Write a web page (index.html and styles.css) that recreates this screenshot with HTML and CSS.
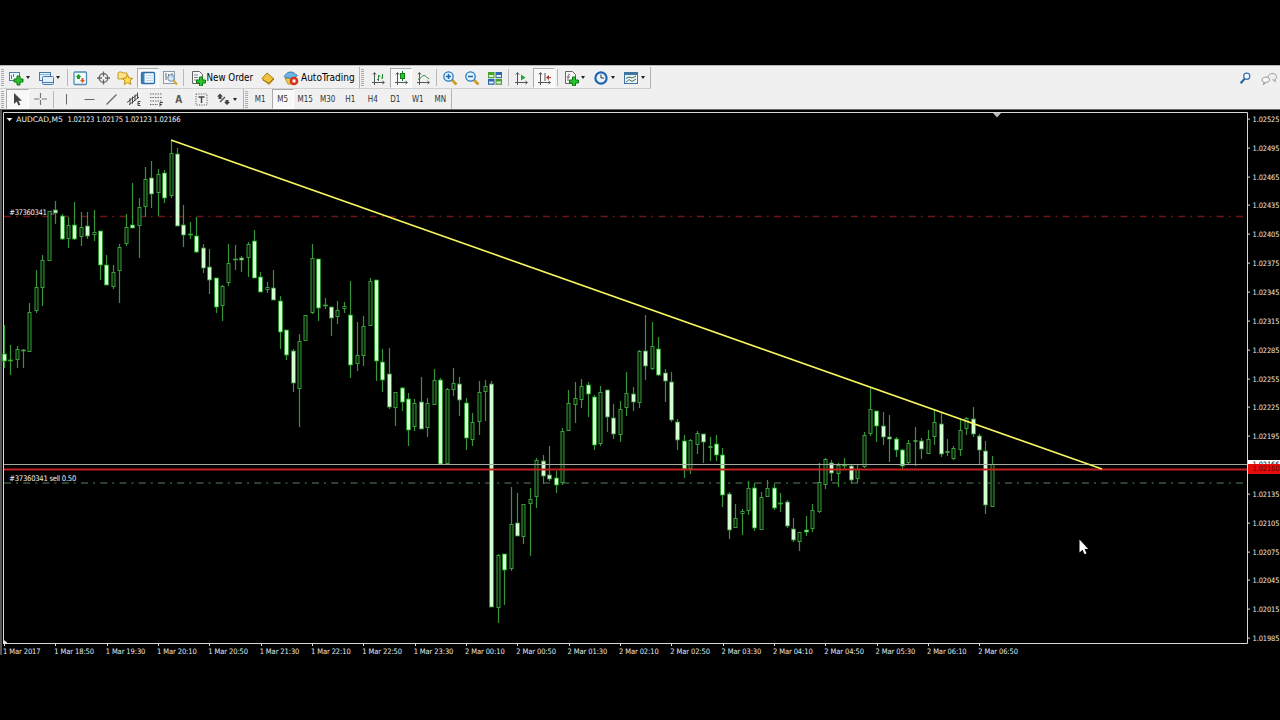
FILE: index.html
```html
<!DOCTYPE html>
<html lang="en">
<head>
    <meta charset="UTF-8">
    <meta name="viewport" content="width=device-width, initial-scale=1.0">
    <title>AUDCAD,M5</title>
    <link rel="stylesheet" href="styles.css">
</head>
<body>
    <div class="terminal">
        <div class="toolbars">
            <div class="row">
                <div class="bar bar-main">
                    <span class="grip"></span>
                    <button class="btn drop"><svg class="icon" viewBox="0 0 16 16"><rect x="1.5" y="2.500" width="10" height="8" fill="#eef6fd" stroke="#4f7ea8"/><path d="M3.500 5v4M5.500 4v3" stroke="#4f7ea8"/><path d="M9 6h3v3h3v3h-3v3H9v-3H6V9h3z" fill="#2cc42c" stroke="#0b7a14"/></svg><i class="caret"></i></button>
                    <button class="btn drop"><svg class="icon" viewBox="0 0 16 16"><rect x="1.500" y="2.500" width="11" height="8" fill="#e4f0fb" stroke="#4779ad"/><path d="M2 4.500h10" stroke="#8eb6db"/><rect x="4.500" y="6.500" width="11" height="8" rx="1" fill="#e4f0fb" stroke="#4779ad"/><path d="M5 12.500h10" stroke="#4779ad"/></svg><i class="caret"></i></button>
                    <span class="sep tight"></span>
                    <button class="btn"><svg class="icon" viewBox="0 0 16 16"><rect x="2" y="2" width="12.500" height="12.500" rx="1" fill="#f3fafe" stroke="#4d8fb5" stroke-width="1.300"/><path d="M6.500 4l3 3H8v2H5V7H3.500z" fill="#22a02a"/><path d="M10.500 13l-2.500-3h1.500V8h2v2H13z" fill="#e05a28"/></svg></button>
                    <button class="btn"><svg class="icon" viewBox="0 0 16 16"><circle cx="8.500" cy="8" r="4.300" fill="none" stroke="#666" stroke-width="1.300"/><path d="M8.500 1.500v5M8.500 9.500v5M2 8h5M10 8h5" stroke="#666" stroke-width="1.300"/></svg></button>
                    <button class="btn"><svg class="icon" viewBox="0 0 16 16"><path d="M1 3l1-1h3l1 1h4v6H1z" fill="#fbe58a" stroke="#c69a2c"/><path d="M10.500 4.800l1.500 3.200 3.700.4-2.700 2.400.8 3.700-3.300-1.900-3.300 1.900.8-3.700-2.700-2.400 3.700-.4z" fill="#ffe14a" stroke="#c28d1c"/></svg></button>
                    <button class="btn on"><svg class="icon" viewBox="0 0 16 16"><rect x="1.500" y="2.500" width="13" height="11" rx="1" fill="#f0f8fe" stroke="#2e6da6" stroke-width="1.300"/><path d="M2 3h2.500v10H2z" fill="#3f7fb9"/><path d="M6 5.500h7M6 8h7M6 10.500h7" stroke="#bcd6ea"/></svg></button>
                    <button class="btn"><svg class="icon" viewBox="0 0 16 16"><rect x="1.500" y="1.500" width="11" height="12" fill="#f4f6f8" stroke="#8a9aa8"/><path d="M4 3v7M6.500 4v4M10 3v5" stroke="#666"/><circle cx="9" cy="8" r="3.300" fill="#cde4f4cc" stroke="#6791b5"/><path d="M11.500 10.500l3.500 4" stroke="#d9a92e" stroke-width="2"/></svg></button>
                    <span class="sep tight"></span>
                    <button class="btn wide order"><svg class="icon" viewBox="0 0 16 16"><path d="M2.500 1.500h7l3 3v9h-10z" fill="#f6f6f6" stroke="#666"/><path d="M4 5h4M4 7.500h4M4 10h3" stroke="#888"/><path d="M9.500 7h3v3h3v3h-3v3h-3v-3h-3v-3h3z" fill="#2cc42c" stroke="#0b7a14"/></svg><span>New Order</span></button>
                    <button class="btn"><svg class="icon" viewBox="0 0 16 16"><path d="M2 8.500L7 3l7 6-5 5.500z" fill="#f1c43c" stroke="#a8781a"/><path d="M2.500 10l6.500 3 4.500-4.500" fill="none" stroke="#a8781a"/></svg></button>
                    <button class="btn wide auto"><svg class="icon" viewBox="0 0 16 16"><path d="M2 8h10l-2 6H5z" fill="#f2cb4c" stroke="#b98d22"/><path d="M1 6.500C3 5 3.500 2 7.500 2s4 2 7 3.500C12 8.500 4 9 1 6.500z" fill="#6bb5e6" stroke="#397fb0"/><circle cx="11" cy="11" r="4.300" fill="#d93018"/><rect x="9.500" y="9.500" width="3" height="3" fill="#fff"/></svg><span>AutoTrading</span></button>
                </div>
                <div class="bar bar-charts">
                    <span class="grip"></span>
                    <button class="btn"><svg class="icon" viewBox="0 0 16 16"><path d="M4.500 3v12M2 12.500h12M3 4.500l1.500-2L6 4.500M12.500 11l2 1.500-2 1.500" fill="none" stroke="#555"/><path d="M8.500 5v6M7 9.500h1.500M8.500 6h2M12.500 4v4.500M11 8h1.500" stroke="#29862e"/></svg></button>
                    <button class="btn on"><svg class="icon" viewBox="0 0 16 16"><path d="M4.500 3v12M2 12.500h12M3 4.500l1.500-2L6 4.500M12.500 11l2 1.500-2 1.500" fill="none" stroke="#555"/><path d="M9.500 1v10" stroke="#167d1b"/><rect x="7.500" y="3.500" width="4" height="5" fill="#25c82b" stroke="#167d1b"/></svg></button>
                    <button class="btn"><svg class="icon" viewBox="0 0 16 16"><path d="M4.500 3v12M2 12.500h12M3 4.500l1.500-2L6 4.500M12.500 11l2 1.500-2 1.500" fill="none" stroke="#555"/><path d="M3 9.500c3-1 4-4 6-4s3 2.500 5 3.500" fill="none" stroke="#3b8a3d"/></svg></button>
                    <span class="sep"></span>
                    <button class="btn"><svg class="icon" viewBox="0 0 16 16"><path d="M10 10l4.500 4.500" stroke="#cf9d22" stroke-width="2.600"/><circle cx="6.500" cy="6.500" r="4.700" fill="#e3f3fd" stroke="#2b79bd" stroke-width="1.300"/><path d="M4 6.500h5M6.500 4v5" stroke="#1b66ad" stroke-width="1.500"/></svg></button>
                    <button class="btn"><svg class="icon" viewBox="0 0 16 16"><path d="M10 10l4.500 4.500" stroke="#cf9d22" stroke-width="2.600"/><circle cx="6.500" cy="6.500" r="4.700" fill="#e3f3fd" stroke="#2b79bd" stroke-width="1.300"/><path d="M4 6.500h5" stroke="#1b66ad" stroke-width="1.500"/></svg></button>
                    <button class="btn"><svg class="icon" viewBox="0 0 16 16"><path d="M1 2h6.500v6H1z" fill="#46a329"/><path d="M8.500 2H15v6H8.500z" fill="#2c66b5"/><path d="M1 8.800h6.500v6H1z" fill="#2c66b5"/><path d="M8.500 8.800H15v6H8.500z" fill="#46a329"/><path d="M2 5h4.500v2H2zM9.500 5H14v2H9.500zM2 11.500h4.500v2H2zM9.500 11.500H14v2H9.500z" fill="#e5f3e5"/></svg></button>
                    <span class="sep"></span>
                    <button class="btn"><svg class="icon" viewBox="0 0 16 16"><path d="M4.500 3v12M2 12.500h12M3 4.500l1.500-2L6 4.500M12.500 11l2 1.500-2 1.500" fill="none" stroke="#555"/><path d="M8 4.500l4.500 3L8 10.500z" fill="#2aa336"/></svg></button>
                    <button class="btn on"><svg class="icon" viewBox="0 0 16 16"><path d="M4.500 3v12M2 12.500h12M3 4.500l1.500-2L6 4.500M12.500 11l2 1.500-2 1.500" fill="none" stroke="#555"/><path d="M9 3v8" stroke="#555"/><path d="M10 7.500l3-2.500v2h2v1h-2v2z" fill="#b2392c"/></svg></button>
                    <span class="sep"></span>
                    <button class="btn drop"><svg class="icon" viewBox="0 0 16 16"><path d="M2.500 1.500h7l3 3v9h-10z" fill="#f6f6f6" stroke="#666"/><path d="M7 4q-2 0-2 3v4M4 7h3" fill="none" stroke="#777"/><path d="M9.500 7h3v3h3v3h-3v3h-3v-3h-3v-3h3z" fill="#2cc42c" stroke="#0b7a14"/></svg><i class="caret"></i></button>
                    <button class="btn drop"><svg class="icon" viewBox="0 0 16 16"><circle cx="8" cy="8" r="5.600" fill="#e8f4fd" stroke="#2064b0" stroke-width="2.200"/><path d="M8 4.500V8h3" fill="none" stroke="#333"/></svg><i class="caret"></i></button>
                    <button class="btn drop"><svg class="icon" viewBox="0 0 16 16"><rect x="1.500" y="2.500" width="13" height="11" fill="#eaf4fb" stroke="#3f75a3"/><path d="M1.500 4h13" stroke="#3f75a3" stroke-width="2"/><path d="M3 8.500l3-1.500 3 1 4-2M3 12.500l3-3 3 2 4-2.500" fill="none" stroke="#4c6b4c"/></svg><i class="caret"></i></button>
                </div>
                <div class="tools">
                    <svg class="icon" viewBox="0 0 16 16"><path d="M7.500 9L3 14" stroke="#245ca3" stroke-width="2.400"/><circle cx="10" cy="6" r="3.500" fill="#f3f8fd" stroke="#3970b4" stroke-width="1.400"/></svg>
                    <svg class="icon chat" viewBox="0 0 18 16"><path d="M8 7c-1-5 9-6 9-1 0 2-1 3-2 3l1 2.500L12.500 9" fill="#eee" stroke="#999"/><path d="M5.500 6.500C.500 6.500.500 12 4 12l-1 2.500L6 12c5 0 5-5.500-.5-5.500z" fill="#f6f6f6" stroke="#888"/></svg>
                </div>
            </div>
            <div class="row row-lines">
                <div class="bar bar-lines">
                    <span class="grip"></span>
                    <button class="btn on"><svg class="icon" viewBox="0 0 16 16"><path d="M5 2v11l2.700-2.500 1.800 4 1.800-.8-1.800-3.900H13z" fill="#444"/></svg></button>
                    <button class="btn"><svg class="icon" viewBox="0 0 16 16"><path d="M8.500 2v5M8.500 9v5M2 8h5.500M9.500 8H15" stroke="#777" stroke-width="1.200"/></svg></button>
                    <span class="sep"></span>
                    <button class="btn"><svg class="icon" viewBox="0 0 16 16"><path d="M8.500 3v10.500" stroke="#666"/></svg></button>
                    <button class="btn"><svg class="icon" viewBox="0 0 16 16"><path d="M3.500 8.500h10" stroke="#666"/></svg></button>
                    <button class="btn"><svg class="icon" viewBox="0 0 16 16"><path d="M3.500 13.500l10-10" stroke="#666" stroke-width="1.200"/></svg></button>
                    <button class="btn"><svg class="icon" viewBox="0 0 16 16"><path d="M1 11.500L12 3M3 14l10-8M4 7v6M6.500 5.500v7M9 3.500v6M11.500 1.500v6" stroke="#444"/><path d="M14.500 10.500H12v4h2.500M12 12.500h2" fill="none" stroke="#444"/></svg></button>
                    <button class="btn"><svg class="icon" viewBox="0 0 16 16"><path d="M2 3h12M2 6.500h12M2 10h12M2 13.500h8" stroke="#666" stroke-dasharray="1.500 1"/><path d="M12 15.500v-4h3M12 13.500h2" fill="none" stroke="#444"/></svg></button>
                    <button class="btn glyph">A</button>
                    <button class="btn"><svg class="icon" viewBox="0 0 16 16"><rect x="3" y="3" width="11" height="11" fill="none" stroke="#666" stroke-dasharray="1.200 1.200"/><path d="M5.500 6h6M8.500 6v6" stroke="#444" stroke-width="1.400"/></svg></button>
                    <button class="btn drop"><svg class="icon" viewBox="0 0 16 16"><path d="M5 2.500l3 3H6.500V8h-3V5.500H2zM12 14l-3-3h1.500V9h3v2H15z" fill="#444"/><path d="M5 11l5-5" stroke="#555" stroke-width="1.400"/></svg><i class="caret"></i></button>
                </div>
                <div class="bar bar-periods">
                    <span class="grip"></span>
                    <button class="btn">M1</button>
                    <button class="btn on">M5</button>
                    <button class="btn">M15</button>
                    <button class="btn">M30</button>
                    <button class="btn">H1</button>
                    <button class="btn">H4</button>
                    <button class="btn">D1</button>
                    <button class="btn">W1</button>
                    <button class="btn">MN</button>
                </div>
            </div>
        </div>
        <div class="chart-window">
            <div class="chart-body">
                <svg id="chart" class="chart" viewBox="2 110 1246 535">
                    <path class="frame" d="M3.500 644V112.500H1247.500V643.500H3.500"/>
                    <path class="mark" d="M993 113h8l-4 4.500z"/>
                    <path class="corner" d="M4 640l4 3.500H4z"/>
                    <path class="caption" d="M6.500 118h6l-3 3.300z"/>
                    <text class="caption" x="16.300" y="122" textLength="46.500" lengthAdjust="spacingAndGlyphs">AUDCAD,M5</text>
                    <text class="caption" x="67.500" y="122" textLength="113">1.02123 1.02175 1.02123 1.02166</text>
                    <path class="stop" d="M4 216.500H1244"/>
                    <text class="caption" x="9.300" y="215" textLength="37.500">#37360341</text>
                    <text class="caption dim" x="49" y="215">sl</text>
                    <path class="entry" d="M4 483H1244"/>
                    <g id="candles"></g>
                    <path class="bid" d="M4 464.500H1247"/>
                    <path class="level" d="M4 469.500H1247"/>
                    <text class="caption" x="9.300" y="481" textLength="67">#37360341 sell 0.50</text>
                    <path class="trend" d="M171 140L1102 469"/>
                    <path class="cursor" d="M1079.500 539.500v13l3-2.700 2 4.500 2-1-2-4.300h3.700z"/>
                </svg>
                <div class="prices" id="prices">
                    <div class="tag tag-bid">1.02166</div>
                    <div class="tag tag-level">1.02160</div>
                </div>
            </div>
            <div class="times" id="times"></div>
        </div>
    </div>
    <script>
        const NS = "http://www.w3.org/2000/svg";
        const firstX = 4.3;
        const step = 6.416;

        // high, body top, body bottom, low, 1 = falling bar (filled)
        const bars = [
            [325,354,361,368,1],[345,360,361,375,1],[346,349,360,368,0],[349,350,351,368,1],[303,312,352,352,0],
            [270,287,311,313,0],[255,260,288,306,0],[211,211,261,261,0],[201,210,213,224,1],[214,216,239,240,1],
            [217,225,239,248,0],[202,225,239,240,1],[212,227,237,246,0],[212,226,236,239,1],[210,232,235,241,0],
            [231,231,265,280,1],[255,265,285,285,1],[265,272,287,289,0],[244,247,271,303,0],[214,227,244,246,0],
            [183,225,228,228,1],[198,207,226,258,0],[167,179,207,217,0],[161,178,194,208,1],[169,174,193,216,0],
            [170,173,198,203,1],[140,153,196,198,0],[148,154,226,226,1],[205,225,235,247,1],[222,234,235,239,1],
            [217,236,252,253,1],[244,248,268,273,1],[249,267,280,294,1],[278,278,307,313,1],[285,286,306,321,0],
            [244,263,283,286,0],[245,259,260,270,1],[256,258,260,272,1],[242,244,258,277,0],[230,241,278,278,1],
            [272,277,292,292,1],[282,287,290,293,0],[270,288,300,300,1],[296,301,332,349,1],[330,330,355,360,1],
            [349,351,383,392,1],[334,341,389,427,0],[315,315,341,341,0],[244,258,313,314,0],[259,259,308,321,1],
            [298,305,306,309,1],[307,307,318,336,1],[301,310,317,324,0],[302,306,309,313,0],[281,315,365,378,1],
            [322,355,364,371,0],[316,326,356,366,0],[278,281,326,326,0],[280,280,361,381,1],[349,362,380,392,1],
            [348,374,407,409,1],[392,392,408,426,0],[387,388,402,411,1],[393,399,430,446,1],[399,403,427,431,0],
            [377,402,429,429,1],[398,403,428,437,0],[369,380,405,405,0],[378,380,464,464,1],[388,389,464,464,0],
            [368,383,390,396,0],[377,384,400,416,1],[398,403,438,450,1],[413,422,440,446,0],[381,392,422,435,0],
            [380,386,392,421,0],[381,384,607,607,1],[554,555,608,623,0],[554,554,570,605,1],[487,524,569,571,0],
            [493,523,536,536,1],[504,504,537,544,0],[488,499,504,556,0],[458,460,497,508,0],[455,461,476,484,1],
            [446,475,479,481,1],[471,478,485,493,1],[428,431,483,485,0],[390,403,431,431,0],[382,398,405,423,0],
            [379,386,400,408,0],[382,385,394,417,1],[395,397,445,450,1],[386,392,444,446,0],[390,390,417,432,1],
            [404,418,434,439,1],[401,409,435,442,0],[372,393,408,416,0],[387,394,402,411,1],[350,351,403,408,0],
            [315,351,366,380,1],[322,346,369,370,0],[337,349,375,376,1],[369,373,381,402,1],[372,382,420,422,1],
            [419,422,440,450,1],[435,441,469,478,1],[439,440,469,474,0],[431,433,445,454,0],[434,434,442,463,1],
            [437,446,448,461,0],[435,444,455,461,1],[448,455,495,507,1],[492,494,530,539,1],[504,518,528,528,0],
            [509,511,514,535,0],[481,488,511,515,0],[483,488,528,531,1],[492,497,530,530,0],[480,488,497,497,0],
            [484,488,508,510,1],[493,503,504,512,1],[500,502,526,528,1],[518,529,540,542,1],[532,532,542,551,0],
            [516,530,532,536,1],[504,510,529,532,0],[463,482,512,513,0],[458,459,485,489,0],[460,463,473,481,1],
            [463,465,474,487,0],[458,465,466,469,1],[465,466,480,484,1],[465,469,479,483,0],[432,435,467,468,0],
            [388,409,434,436,0],[411,411,426,442,1],[412,426,437,445,1],[415,437,439,462,1],[437,439,450,457,1],
            [449,450,466,469,1],[440,443,463,464,0],[427,440,442,466,0],[438,441,449,459,1],[430,439,454,454,0],
            [409,422,437,445,0],[413,424,454,457,1],[439,451,453,456,0],[446,448,459,460,0],[420,430,450,456,0],
            [417,418,429,435,0],[407,419,434,437,1],[434,436,450,464,1],[441,451,505,514,1],[456,464,507,507,0]
        ];

        function add(parent, name, attrs) {
            const el = document.createElementNS(NS, name);
            for (const key in attrs) {
                el.setAttribute(key, attrs[key]);
            }
            parent.appendChild(el);
        }

        const candles = document.getElementById("candles");
        bars.forEach(([high, top, bottom, low, down], i) => {
            const x = Math.floor(firstX + step * i) + 0.5;
            add(candles, "path", { class: "wick", d: `M${x} ${high}V${low}` });
            if (down) {
                add(candles, "rect", { class: "down", x: x - 2, y: top, width: 4, height: Math.max(bottom - top, 1) });
            } else {
                add(candles, "rect", { class: "up", x: x - 1.5, y: top + 0.5, width: 3, height: Math.max(bottom - top - 1, 1) });
            }
        });

        const prices = document.getElementById("prices");
        for (let p = 102525; p >= 101985; p -= 30) {
            // this level is hidden behind the price tags
            const row = document.createElement("div");
            row.className = "price";
            row.textContent = p === 102165 ? "" : (p / 100000).toFixed(5);
            prices.appendChild(row);
        }

        const times = [
            "1 Mar 2017", "1 Mar 18:50", "1 Mar 19:30", "1 Mar 20:10", "1 Mar 20:50",
            "1 Mar 21:30", "1 Mar 22:10", "1 Mar 22:50", "1 Mar 23:30", "2 Mar 00:10",
            "2 Mar 00:50", "2 Mar 01:30", "2 Mar 02:10", "2 Mar 02:50", "2 Mar 03:30",
            "2 Mar 04:10", "2 Mar 04:50", "2 Mar 05:30", "2 Mar 06:10", "2 Mar 06:50"
        ];
        times.forEach((t) => {
            const cell = document.createElement("div");
            cell.className = "time";
            cell.textContent = t;
            document.getElementById("times").appendChild(cell);
        });
    </script>
</body>
</html>
```
FILE: styles.css
```css
* {
    box-sizing: border-box;
}

body {
    margin: 0;
    background-color: #000;
    font-family: "DejaVu Sans Condensed", "DejaVu Sans", sans-serif;
    font-stretch: condensed;
    overflow: hidden;
}

.terminal {
    width: 1280px;
    height: 720px;
    padding-top: 65px;
}

.toolbars {
    height: 44px;
    padding-top: 1px;
    background-color: #f0f0f0;
    border-top: 1px solid #b4b4b4;
}

.row {
    display: flex;
    height: 22px;
    align-items: stretch;
}

.row-lines {
    height: 20px;
}

.bar {
    display: flex;
    align-items: center;
    padding-left: 1px;
    border-right: 1px solid #b4b4b4;
    border-bottom: 1px solid #d0d0d0;
}

.row-lines .bar {
    border-bottom: none;
}

.bar-main {
    width: 360px;
}

.bar-charts {
    width: 291px;
}

.bar-lines {
    width: 244px;
}

.bar-periods {
    width: 208px;
}

.grip {
    flex: none;
    width: 3px;
    height: 17px;
    margin-right: 2px;
    background: repeating-linear-gradient(#aaa 0 1px, #f0f0f0 1px 2px);
}

.bar-charts .grip {
    margin-right: 3px;
}

.bar-periods .grip {
    margin-right: 1px;
}

.sep {
    flex: none;
    width: 1px;
    height: 17px;
    margin: 0 1.5px;
    background-color: #b8b8b8;
}

.sep.tight {
    margin: 0 1px;
}

.btn {
    flex: none;
    display: flex;
    align-items: center;
    justify-content: center;
    width: 22.5px;
    height: 20px;
    padding: 0;
    border: 1px solid transparent;
    background: none;
    font-family: inherit;
    font-stretch: inherit;
    font-size: 8px;
    color: #333;
}

.btn.on {
    background-color: #f8f8f8;
    border-color: #aaa #fff #fff #aaa;
}

.btn.drop {
    width: 30px;
    justify-content: flex-start;
    padding-left: 1px;
    gap: 2px;
}

.bar-charts .btn.drop {
    padding-left: 3px;
}

.btn.glyph {
    font-size: 10px;
    font-weight: bold;
    color: #555;
}

.btn.wide {
    justify-content: flex-start;
    font-size: 10px;
    color: #000;
    white-space: nowrap;
    gap: 1px;
}

.btn.order {
    width: 72px;
    padding-left: 4px;
    font-size: 9.7px;
}

.btn.auto {
    width: 80px;
    padding-left: 3px;
    gap: 2px;
}

.icon {
    flex: none;
    width: 16px;
    height: 16px;
}

.caret {
    border: 2px solid transparent;
    border-top: 3px solid #222;
    border-bottom: 0;
}

.tools {
    display: flex;
    align-items: center;
    gap: 8px;
    margin-left: auto;
    padding-right: 2px;
}

.tools .icon {
    width: 14px;
    height: 14px;
}

.tools .chat {
    width: 18px;
    height: 15px;
}

.chart-window {
    height: 546px;
    border-top: 1px solid #686868;
    border-left: 2px solid #555;
}

.chart-body {
    display: flex;
    height: 535px;
}

.chart {
    flex: none;
    width: 1246px;
    height: 535px;
}

.chart path {
    fill: none;
}

.chart .frame {
    stroke: #d8d8d8;
}

.chart .mark {
    fill: #bbb;
}

.chart .corner,
.chart .caption {
    fill: #f0f0f0;
}

.chart text {
    font-size: 7.6px;
}

.chart .dim {
    fill: #aaa;
}

.chart .stop {
    stroke: #6c1417;
    stroke-dasharray: 7 5 2 5.25;
    stroke-width: 1.6;
}

.chart .entry {
    stroke: #3d573f;
    stroke-dasharray: 7 5 2 5.25;
    stroke-width: 1.6;
}

.chart .bid {
    stroke: #a4aaa4;
}

.chart .level {
    stroke: #c42020;
    stroke-width: 2;
}

.chart .trend {
    stroke: #f6f65e;
    stroke-width: 1.6;
}

.chart .cursor {
    fill: #fff;
}

.chart .wick {
    stroke: #389438;
    stroke-width: 1.2;
}

.up {
    fill: #001a00;
    stroke: #3d9c3f;
}

.down {
    fill: #d2ffd0;
    stroke: #1f9422;
    stroke-width: 0.8;
}

.prices {
    position: relative;
    flex: 1;
    font-size: 7.4px;
    letter-spacing: -0.1px;
    color: #e8e8e8;
}

.price {
    display: flex;
    align-items: center;
    height: 28.85px;
    transform: translateY(-5.4px);
}

.price::before {
    content: "";
    width: 2px;
    height: 1px;
    margin-right: 2.5px;
    background-color: #ddd;
}

/* current price tags lie over the scale */
.tag {
    position: absolute;
    left: 0;
    right: 0;
    z-index: 1;
    height: 10px;
    padding-left: 4.5px;
    line-height: 10px;
    color: #000;
}

.tag-bid {
    top: 350px;
    background-color: #fff;
}

.tag-level {
    top: 354px;
    background-color: #e80c0c;
    color: #5c0000;
}

.times {
    display: flex;
    padding: 1px 0 0 1px;
    font-size: 7.5px;
    letter-spacing: -0.1px;
    color: #e8e8e8;
}

.time {
    position: relative;
    flex: none;
    width: 51.33px;
    line-height: 12px;
    white-space: nowrap;
}

.time::before {
    content: "";
    position: absolute;
    left: 1px;
    top: -2px;
    width: 1px;
    height: 2px;
    background-color: #ddd;
}
```
